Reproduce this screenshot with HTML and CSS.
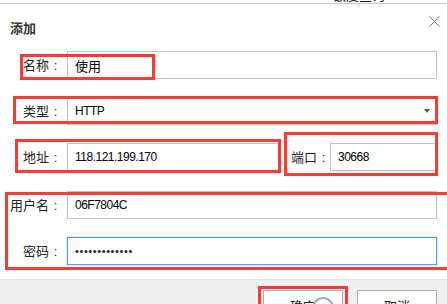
FILE: index.html
```html
<!DOCTYPE html>
<html lang="zh">
<head>
<meta charset="utf-8">
<title>添加</title>
<link rel="stylesheet" href="styles.css">
</head>
<body>
<div class="page">
  <div class="topbar"><span class="topbar-text">额度查询</span></div>
  <div class="dialog">
    <div class="header">
      <span class="title">添加</span>
      <svg class="close" width="11" height="11" viewBox="0 0 11 11"><path d="M0.5 0.5 L10.5 10.5 M10.5 0.5 L0.5 10.5" stroke="#7a7a7a" stroke-width="1" fill="none"/></svg>
    </div>
    <div class="form">
      <div class="row">
        <span class="label">名称<span class="colon">:</span></span>
        <div class="field grow">使用</div>
      </div>
      <div class="row">
        <span class="label">类型<span class="colon">:</span></span>
        <div class="field grow select"><span class="latin">HTTP</span><span class="arrow"></span></div>
      </div>
      <div class="row">
        <span class="label">地址<span class="colon">:</span></span>
        <div class="field addr"><span class="latin">118.121.199.170</span></div>
        <span class="label port-label">端口<span class="colon">:</span></span>
        <div class="field grow"><span class="latin">30668</span></div>
      </div>
      <div class="row row-user">
        <span class="label">用户名<span class="colon">:</span></span>
        <div class="field grow"><span class="latin">06F7804C</span></div>
      </div>
      <div class="row">
        <span class="label">密码<span class="colon">:</span></span>
        <div class="field grow focused"><span class="dots">•••••••••••••</span></div>
      </div>
    </div>
    <div class="footer">
      <div class="btn">确定</div>
      <div class="btn">取消</div>
    </div>
  </div>
  <div class="marks">
    <div class="mark m-name"></div>
    <div class="mark m-type"></div>
    <div class="mark m-addr"></div>
    <div class="mark m-port"></div>
    <div class="mark m-cred"></div>
    <div class="mark m-ok"></div>
    <div class="watermark"></div>
  </div>
</div>
</body>
</html>
```
FILE: styles.css
```css
html, body {
  margin: 0;
  padding: 0;
  background: #fff;
}
.page {
  position: relative;
  width: 447px;
  height: 304px;
  overflow: hidden;
  font-family: "Noto Sans CJK SC", "Liberation Sans", sans-serif;
  font-size: 13px;
  color: #222;
}
.topbar {
  height: 3px;
  border-bottom: 1px solid #c6c6c6;
  overflow: hidden;
  display: flex;
  justify-content: flex-end;
  padding-right: 62px;
}
.topbar-text {
  display: block;
  line-height: 16px;
  margin-top: -13px;
  font-size: 13px;
  color: #111;
}
.dialog {
  display: flex;
  flex-direction: column;
}
.header {
  display: flex;
  justify-content: space-between;
  align-items: flex-start;
  padding: 16px 7px 0 10px;
  height: 16px;
}
.title {
  font-weight: bold;
  line-height: 16px;
  color: #333;
}
.close {
  margin-top: -4px;
}
.form {
  display: flex;
  flex-direction: column;
  gap: 18px;
  padding: 0 10px;
  margin-top: 15px;
}
.row {
  display: flex;
  align-items: center;
  height: 28px;
}
.row-user {
  margin-top: 2px;
}
.label {
  width: 52px;
  text-align: right;
  margin-right: 5px;
  flex: none;
  line-height: 16px;
  white-space: nowrap;
  color: #222;
}
.colon {
  display: inline-block;
  width: 13px;
  text-align: center;
  font-family: "Liberation Sans", sans-serif;
  font-size: 13px;
}
.port-label {
  width: 39px;
  margin-left: 12px;
  margin-right: 0;
}
.field {
  box-sizing: border-box;
  height: 28px;
  border: 1px solid #c2c2c2;
  display: flex;
  align-items: center;
  padding-left: 7px;
  color: #000;
  background: #fff;
}
.grow {
  flex: 1;
}
.addr {
  width: 212px;
  flex: none;
}
.latin {
  font-family: "Liberation Sans", sans-serif;
  font-size: 12px;
  letter-spacing: -0.5px;
}
.select {
  justify-content: space-between;
  padding-right: 6px;
}
.arrow {
  width: 0;
  height: 0;
  border-left: 3px solid transparent;
  border-right: 3px solid transparent;
  border-top: 4px solid #555;
}
.focused {
  border-color: #4aa0ef;
  box-shadow: 0 0 0 1px #dbecfa;
}
.dots {
  font-family: "Liberation Sans", sans-serif;
  font-size: 11px;
  letter-spacing: 0.6px;
  color: #222;
}
.footer {
  margin-top: 14px;
  height: 40px;
  background: #f0f0f0;
  border-top: 1px solid #e2e2e2;
  display: flex;
  justify-content: flex-end;
  align-items: flex-start;
  gap: 14px;
  padding: 10px 10px 0;
}
.btn {
  box-sizing: border-box;
  width: 80px;
  height: 24px;
  border: 1px solid #adadad;
  background: #fdfdfd;
  text-align: center;
  line-height: 22px;
  padding-top: 4px;
  color: #222;
}
.marks {
  position: absolute;
  inset: 0;
  pointer-events: none;
}
.mark {
  position: absolute;
  box-sizing: border-box;
  border: 3px solid #fd3a3a;
}
.m-name { left: 20px; top: 54px; width: 135px; height: 26px; }
.m-type { left: 13px; top: 96px; width: 425px; height: 28px; }
.m-addr { left: 15px; top: 139px; width: 266px; height: 34px; }
.m-port { left: 284px; top: 132px; width: 154px; height: 44px; }
.m-cred { left: 5px; top: 192px; width: 450px; height: 78px; }
.m-ok { left: 258px; top: 286px; width: 90px; height: 30px; }
.watermark {
  position: absolute;
  left: 312px;
  top: 297px;
  width: 18px;
  height: 18px;
  border: 2px solid #a8a8a8;
  border-radius: 50%;
  background: rgba(255,255,255,0.6);
}
```
